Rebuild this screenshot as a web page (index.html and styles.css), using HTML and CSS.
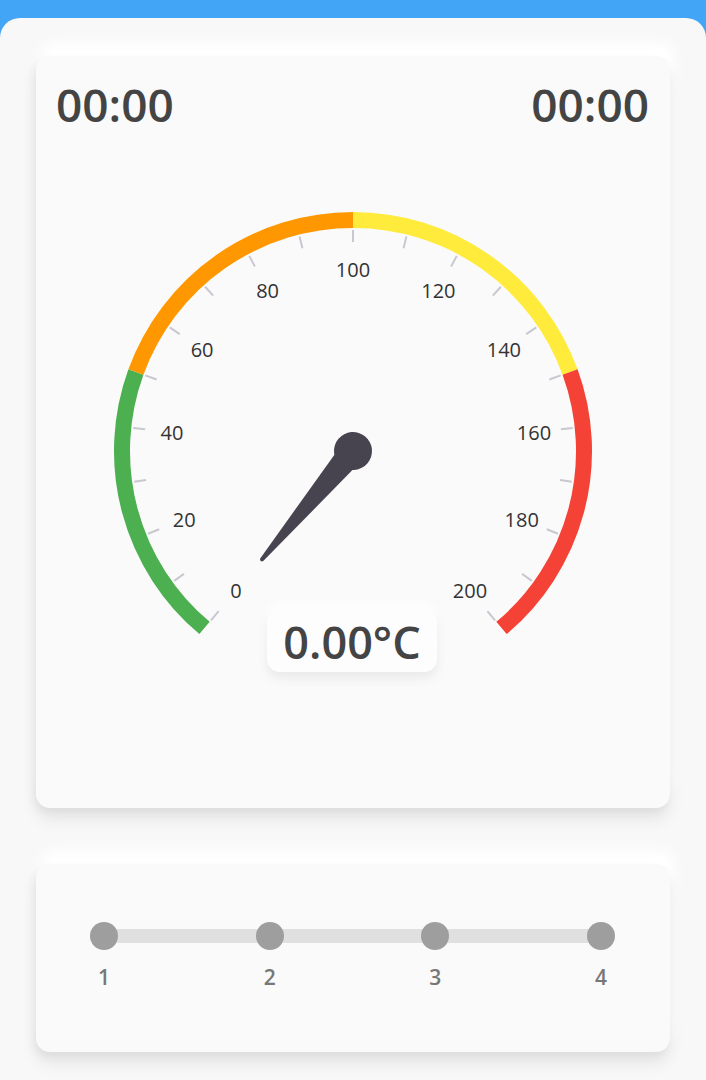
FILE: index.html
```html
<!DOCTYPE html>
<html lang="en">
<head>
<meta charset="utf-8">
<title>Gauge</title>
<link rel="stylesheet" href="styles.css">
</head>
<body>
<div class="topbar"></div>
<main class="sheet">
  <section class="card gauge-card">
    <div class="times">
      <span class="time">00:00</span>
      <span class="time">00:00</span>
    </div>
    <div class="gauge">
      <svg class="gauge-svg" width="634" height="567" viewBox="0 0 634 567">
        <g fill="none" stroke-width="16">
          <path d="M168.52 495.96 A231 231 0 0 1 99.93 239.99" stroke="#4caf50"/>
          <path d="M99.93 239.99 A231 231 0 0 1 317 88" stroke="#ff9800"/>
          <path d="M317 88 A231 231 0 0 1 534.07 239.99" stroke="#ffeb3b"/>
          <path d="M534.07 239.99 A231 231 0 0 1 465.48 495.96" stroke="#f44336"/>
        </g>
        <g transform="translate(317 319)" stroke="#c9c7d0" stroke-width="2">
          <line x1="209" y1="0" x2="221" y2="0" transform="rotate(130)"/>
          <line x1="209" y1="0" x2="221" y2="0" transform="rotate(144)"/>
          <line x1="209" y1="0" x2="221" y2="0" transform="rotate(158)"/>
          <line x1="209" y1="0" x2="221" y2="0" transform="rotate(172)"/>
          <line x1="209" y1="0" x2="221" y2="0" transform="rotate(186)"/>
          <line x1="209" y1="0" x2="221" y2="0" transform="rotate(200)"/>
          <line x1="209" y1="0" x2="221" y2="0" transform="rotate(214)"/>
          <line x1="209" y1="0" x2="221" y2="0" transform="rotate(228)"/>
          <line x1="209" y1="0" x2="221" y2="0" transform="rotate(242)"/>
          <line x1="209" y1="0" x2="221" y2="0" transform="rotate(256)"/>
          <line x1="209" y1="0" x2="221" y2="0" transform="rotate(270)"/>
          <line x1="209" y1="0" x2="221" y2="0" transform="rotate(284)"/>
          <line x1="209" y1="0" x2="221" y2="0" transform="rotate(298)"/>
          <line x1="209" y1="0" x2="221" y2="0" transform="rotate(312)"/>
          <line x1="209" y1="0" x2="221" y2="0" transform="rotate(326)"/>
          <line x1="209" y1="0" x2="221" y2="0" transform="rotate(340)"/>
          <line x1="209" y1="0" x2="221" y2="0" transform="rotate(354)"/>
          <line x1="209" y1="0" x2="221" y2="0" transform="rotate(368)"/>
          <line x1="209" y1="0" x2="221" y2="0" transform="rotate(382)"/>
          <line x1="209" y1="0" x2="221" y2="0" transform="rotate(396)"/>
          <line x1="209" y1="0" x2="221" y2="0" transform="rotate(410)"/>
        </g>
        <g class="scale-labels" text-anchor="middle" dominant-baseline="central">
          <text x="200" y="458.4">0</text>
          <text x="148.3" y="387.2">20</text>
          <text x="136" y="300">40</text>
          <text x="166.1" y="217.2">60</text>
          <text x="231.6" y="158.3">80</text>
          <text x="317" y="137">100</text>
          <text x="402.4" y="158.3">120</text>
          <text x="467.9" y="217.2">140</text>
          <text x="498" y="300">160</text>
          <text x="485.7" y="387.2">180</text>
          <text x="434" y="458.4">200</text>
        </g>
        <g transform="translate(317 319) rotate(130)" fill="#47434f">
          <path d="M0 -13 L142 -2 Q145.5 0 142 2 L0 13 Z"/>
          <circle cx="0" cy="0" r="19"/>
        </g>
      </svg>
      <div class="reading">0.00°C</div>
    </div>
  </section>

  <section class="card steps-card">
    <div class="steps">
      <div class="track">
        <span class="dot"></span>
        <span class="dot"></span>
        <span class="dot"></span>
        <span class="dot"></span>
      </div>
      <div class="step-labels">
        <span class="step-label">1</span>
        <span class="step-label">2</span>
        <span class="step-label">3</span>
        <span class="step-label">4</span>
      </div>
    </div>
  </section>
</main>
</body>
</html>
```

FILE: styles.css
```css
html, body {
  margin: 0;
  padding: 0;
}

body {
  background: #42a5f5;
  font-family: "Open Sans", "Noto Sans", sans-serif;
  width: 706px;
  height: 1080px;
  overflow: hidden;
}

.topbar {
  height: 18px;
  background: #42a5f5;
}

.sheet {
  background: #f8f8f8;
  border-radius: 20px 20px 0 0;
  height: 1062px;
  box-sizing: border-box;
  padding: 38px 36px 0;
  display: flex;
  flex-direction: column;
  gap: 56px;
}

.card {
  background: #fafafa;
  border-radius: 14px;
  box-shadow:
    0 12px 16px rgba(0, 0, 0, 0.07),
    -3px 4px 10px rgba(0, 0, 0, 0.05),
    4px -14px 14px rgba(255, 255, 255, 1);
}

.gauge-card {
  height: 752px;
  box-sizing: border-box;
  padding-top: 18px;
}

.times {
  display: flex;
  justify-content: space-between;
  padding: 0 21px 0 20px;
}

.time {
  font-size: 46px;
  font-weight: 600;
  line-height: 60px;
  color: #444444;
}

.gauge {
  position: relative;
  height: 568px;
  margin-top: -2px;
}

.gauge-svg {
  display: block;
}

.scale-labels {
  font-family: "Open Sans", "Noto Sans", sans-serif;
  font-size: 20px;
  fill: #333333;
}

.reading {
  position: absolute;
  top: 477px;
  left: 50%;
  margin-left: -86px;
  width: 170px;
  height: 63px;
  border-radius: 13px;
  background: #fdfdfd;
  box-shadow: 0 6px 12px rgba(0, 0, 0, 0.07), 0 -6px 10px rgba(255, 255, 255, 0.9);
  text-align: center;
  font-size: 45px;
  font-weight: 600;
  line-height: 65px;
  color: #444444;
}

.steps-card {
  height: 188px;
  box-sizing: border-box;
  padding: 58px 55px 0 54px;
}

.steps {
  display: flex;
  flex-direction: column;
  gap: 13px;
}

.track {
  display: flex;
  justify-content: space-between;
  background: linear-gradient(#e0e0e0, #e0e0e0) no-repeat center / calc(100% - 28px) 14px;
}

.dot {
  width: 28px;
  height: 28px;
  border-radius: 50%;
  background: #9e9e9e;
}

.step-labels {
  display: flex;
  justify-content: space-between;
}

.step-label {
  width: 28px;
  text-align: center;
  font-size: 21px;
  font-weight: 600;
  line-height: 28px;
  color: #777777;
}
```
